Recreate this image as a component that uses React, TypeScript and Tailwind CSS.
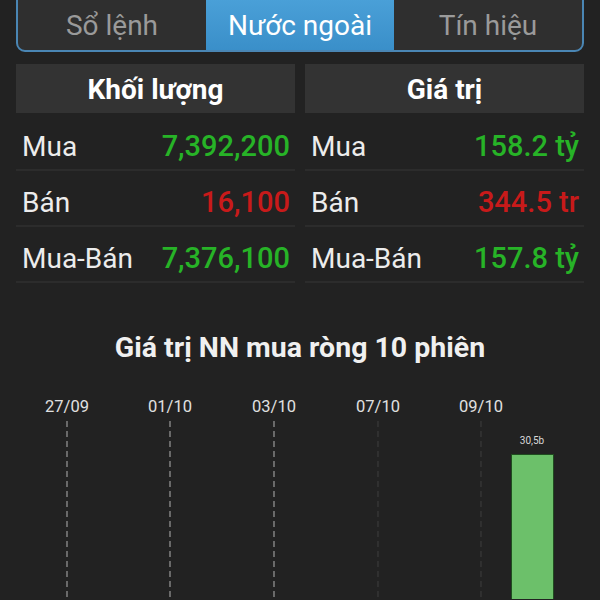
import React from "react";

const tabs = ["Sổ lệnh", "Nước ngoài", "Tín hiệu"];

type Row = { label: string; value: string; up: boolean };

const volumeRows: Row[] = [
  { label: "Mua", value: "7,392,200", up: true },
  { label: "Bán", value: "16,100", up: false },
  { label: "Mua-Bán", value: "7,376,100", up: true },
];

const valueRows: Row[] = [
  { label: "Mua", value: "158.2 tỷ", up: true },
  { label: "Bán", value: "344.5 tr", up: false },
  { label: "Mua-Bán", value: "157.8 tỷ", up: true },
];

const dates = [
  { x: 67, label: "27/09", strong: true },
  { x: 170, label: "01/10", strong: true },
  { x: 274, label: "03/10", strong: true },
  { x: 378, label: "07/10", strong: false },
  { x: 481, label: "09/10", strong: false },
];

function Column({ title, rows }: { title: string; rows: Row[] }) {
  return (
    <div className="flex flex-col">
      <div className="h-[49px] bg-[#333333] flex items-center justify-center pt-[2px] text-[28px] font-bold text-white">
        {title}
      </div>
      <div className="mt-[2px]">
        {rows.map((r) => (
          <div
            key={r.label}
            className="h-[56px] pt-[9px] flex items-center justify-between pl-[6px] pr-[5px] border-b-2 border-[#2c2c2c]"
          >
            <span className="text-[28px] text-[#ececec]">{r.label}</span>
            <span
              className={
                r.up
                  ? "text-[29px] font-medium text-[#27b327]"
                  : "text-[29px] font-medium text-[#c81a1a]"
              }
            >
              {r.value}
            </span>
          </div>
        ))}
      </div>
    </div>
  );
}

function NetBuyChart() {
  return (
    <svg width="600" height="210" viewBox="0 0 600 210" className="block">
      {dates.map((d) => (
        <g key={d.label}>
          <text
            x={d.x}
            y={23}
            textAnchor="middle"
            fontSize="16.5"
            fill="#e0e0e0"
            fontFamily="Roboto, sans-serif"
          >
            {d.label}
          </text>
          <line
            x1={d.x}
            y1={32}
            x2={d.x}
            y2={210}
            stroke={d.strong ? "#9a9a9a" : "#3a3a3a"}
            strokeWidth="1.2"
            strokeDasharray="6 4"
          />
        </g>
      ))}
      <text
        x={532}
        y={55}
        textAnchor="middle"
        fontSize="10"
        fill="#d8d8d8"
        fontFamily="Roboto, sans-serif"
      >
        30,5b
      </text>
      <rect x={511.5} y={65.5} width={42} height={150} fill="#6cc06a" stroke="#1f4d1f" strokeWidth="1" />
    </svg>
  );
}

export default function App() {
  return (
    <div className="w-[600px] h-[600px] overflow-hidden bg-[#222222] font-['Roboto',sans-serif]">
      <div className="mx-4 -mt-[3px] h-[55px] flex rounded-b-[9px] border-2 border-[#4a86b4] overflow-hidden bg-[#2f2f2f]">
        {tabs.map((t, i) => (
          <div
            key={t}
            className={
              i === 1
                ? "flex-1 flex items-center justify-center pt-[3px] bg-gradient-to-b from-[#4aa0d8] to-[#3a8fc9] text-[28px] text-white"
                : "flex-1 flex items-center justify-center pt-[3px] text-[28px] text-[#9a9a9a]"
            }
          >
            {t}
          </div>
        ))}
      </div>

      <div className="mt-[12px] px-4 grid grid-cols-2 gap-[10px]">
        <Column title="Khối lượng" rows={volumeRows} />
        <Column title="Giá trị" rows={valueRows} />
      </div>

      <div className="mt-[47px] text-center text-[28.5px] leading-[36px] font-bold text-[#f0f0f0]">
        Giá trị NN mua ròng 10 phiên
      </div>

      <div className="mt-[23px]">
        <NetBuyChart />
      </div>
    </div>
  );
}
